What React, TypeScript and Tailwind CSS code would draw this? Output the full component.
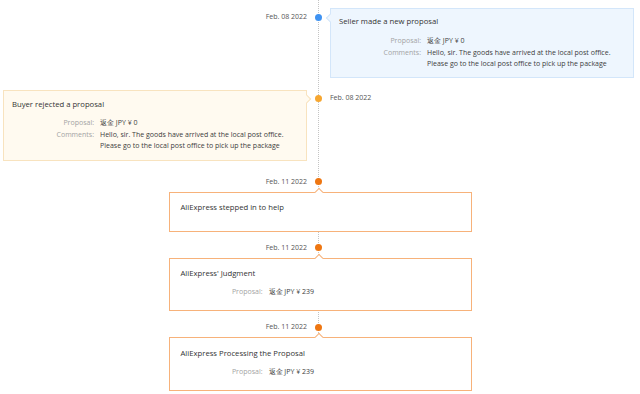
const Dot = ({ color }: { color: string }) => (
  <div className={`w-[7px] h-[7px] rounded-full mx-auto ${color}`} />
);

type Row = { label: string; value: string[] };

const Details = ({ rows, labelW, gap }: { rows: Row[]; labelW: string; gap: string }) => (
  <div className="flex flex-col gap-[1px]">
    {rows.map((r) => (
      <div key={r.label} className={`flex ${gap} text-[7px] leading-[11px]`}>
        <div className={`${labelW} h-[11px] shrink-0 text-right text-[#a3a3a3]`}>{r.label}</div>
        <div className="text-[#3d3d3d]">
          {r.value.map((v) => (
            <div key={v} className="h-[11px] whitespace-nowrap">
              {v}
            </div>
          ))}
        </div>
      </div>
    ))}
  </div>
);

const comment = [
  "Hello, sir. The goods have arrived at the local post office.",
  "Please go to the local post office to pick up the package",
];

const sideRows: Row[] = [
  { label: "Proposal:", value: ["返金 JPY ¥ 0"] },
  { label: "Comments:", value: comment },
];

const Title = ({ children }: { children: string }) => (
  <div className="h-[10px] text-[7.7px] leading-[10px] text-[#333]">{children}</div>
);

const DateRow = ({ date, dot }: { date: string; dot: string }) => (
  <div className="grid grid-cols-[313px_10px_1fr] h-[10px] items-center">
    <div className="text-right pr-[6px] text-[7px] leading-[10px] text-[#555]">{date}</div>
    <Dot color={dot} />
    <div />
  </div>
);

const CenterCard = ({ title, proposal }: { title: string; proposal?: string }) => (
  <div
    className={`relative mt-[5px] mx-auto w-[303px] bg-white border border-[#f7b27a] pl-[11px] pt-[9.5px] ${
      proposal ? "pb-[13px]" : "pb-[18.5px]"
    }`}
  >
    <div className="absolute left-[146px] top-[-4px] w-[6px] h-[6px] rotate-45 bg-white border-t border-l border-[#f7b27a]" />
    <Title>{title}</Title>
    {proposal && (
      <div className="mt-[8px]">
        <Details rows={[{ label: "Proposal:", value: [proposal] }]} labelW="w-[82px]" gap="gap-[6px]" />
      </div>
    )}
  </div>
);

export default function App() {
  return (
    <div className="relative w-[640px] h-[394px] overflow-hidden bg-white font-['Open_Sans',sans-serif]">
      {/* timeline rail */}
      <div className="absolute left-[318px] top-0 h-[345px] border-l border-dotted border-[#c4c4c4]" />

      <div className="relative flex flex-col pt-[7.5px]">
        {/* seller proposal */}
        <div className="grid grid-cols-[313px_10px_1fr]">
          <div className="text-right pr-[6px] pt-[4.5px] text-[7px] leading-[10px] text-[#555]">Feb. 08 2022</div>
          <div className="pt-[6px]">
            <Dot color="bg-[#3f93f2]" />
          </div>
          <div className="relative ml-[7px] w-[304px] bg-[#eef6fe] border border-[#d3e6fa] pl-[8px] pt-[7.5px] pb-[8.5px]">
            <div className="absolute left-[-4px] top-[6px] w-[6px] h-[6px] rotate-45 bg-[#eef6fe] border-l border-b border-[#d3e6fa]" />
            <Title>Seller made a new proposal</Title>
            <div className="mt-[8.5px]">
              <Details rows={sideRows} labelW="w-[82px]" gap="gap-[6px]" />
            </div>
          </div>
        </div>

        {/* buyer rejected */}
        <div className="grid grid-cols-[313px_10px_1fr] mt-[12px]">
          <div className="relative ml-[3px] w-[304px] bg-[#fffaf0] border border-[#f8e3bf] pl-[8px] pt-[7.5px] pb-[8.5px]">
            <div className="absolute right-[-4px] top-[5px] w-[6px] h-[6px] rotate-45 bg-[#fffaf0] border-t border-r border-[#f8e3bf]" />
            <Title>Buyer rejected a proposal</Title>
            <div className="mt-[8.5px]">
              <Details rows={sideRows} labelW="w-[82px]" gap="gap-[6px]" />
            </div>
          </div>
          <div className="pt-[4.5px]">
            <Dot color="bg-[#f6a630]" />
          </div>
          <div className="pl-[7px] pt-[3px] text-[7px] leading-[10px] text-[#555]">Feb. 08 2022</div>
        </div>

        <div className="mt-[16px]">
          <DateRow date="Feb. 11 2022" dot="bg-[#ee7611]" />
        </div>
        <CenterCard title="AliExpress stepped in to help" />

        <div className="mt-[11px]">
          <DateRow date="Feb. 11 2022" dot="bg-[#ee7611]" />
        </div>
        <CenterCard title="AliExpress' Judgment" proposal="返金 JPY ¥ 239" />

        <div className="mt-[11px]">
          <DateRow date="Feb. 11 2022" dot="bg-[#ee7611]" />
        </div>
        <CenterCard title="AliExpress Processing the Proposal" proposal="返金 JPY ¥ 239" />
      </div>
    </div>
  );
}
